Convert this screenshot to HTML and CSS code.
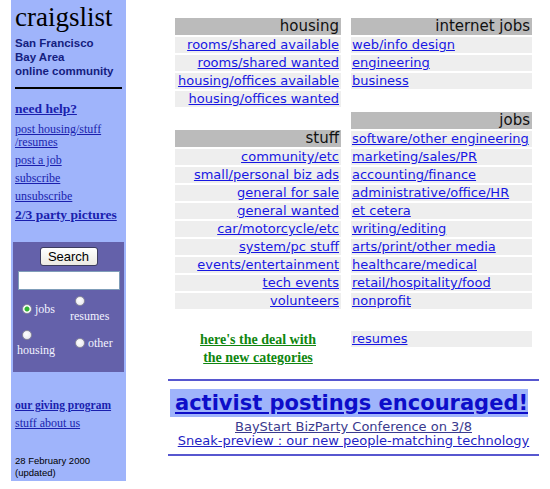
FILE: index.html
```html
<!DOCTYPE html>
<html>
<head>
<meta charset="utf-8">
<title>craigslist</title>
<link rel="stylesheet" href="styles.css">
</head>
<body>
<div class="page">
  <aside class="sidebar">
    <div class="logo">craigslist</div>
    <div class="city">San Francisco<br>Bay Area<br>online community</div>
    <div class="rule"></div>
    <a class="help" href="#">need help?</a>
    <a class="slink" href="#">post housing/stuff /resumes</a>
    <a class="slink" href="#">post a job</a>
    <a class="slink" href="#">subscribe</a>
    <a class="slink" href="#">unsubscribe</a>
    <a class="party" href="#">2/3 party pictures</a>
    <form class="search">
      <button type="button" class="sbtn">Search</button>
      <input class="sinput" type="text">
      <div class="radios">
        <label class="cell inline"><input type="radio" name="c" checked><span>jobs</span></label>
        <label class="cell stack"><input type="radio" name="c"><span>resumes</span></label>
        <label class="cell stack"><input type="radio" name="c"><span>housing</span></label>
        <label class="cell inline"><input type="radio" name="c"><span>other</span></label>
      </div>
    </form>
    <a class="giving" href="#">our giving program</a>
    <a class="about" href="#">stuff about us</a>
    <div class="date">28 February 2000<br>(updated)</div>
  </aside>

  <main class="main">
    <div class="cols">
      <div class="col left">
        <div class="section">
          <div class="hdr">housing</div>
          <div class="row"><a href="#">rooms/shared available</a></div>
          <div class="row"><a href="#">rooms/shared wanted</a></div>
          <div class="row"><a href="#">housing/offices available</a></div>
          <div class="row"><a href="#">housing/offices wanted</a></div>
        </div>
        <div class="section">
          <div class="hdr">stuff</div>
          <div class="row"><a href="#">community/etc</a></div>
          <div class="row"><a href="#">small/personal biz ads</a></div>
          <div class="row"><a href="#">general for sale</a></div>
          <div class="row"><a href="#">general wanted</a></div>
          <div class="row"><a href="#">car/motorcycle/etc</a></div>
          <div class="row"><a href="#">system/pc stuff</a></div>
          <div class="row"><a href="#">events/entertainment</a></div>
          <div class="row"><a href="#">tech events</a></div>
          <div class="row"><a href="#">volunteers</a></div>
        </div>
        <div class="deal"><a href="#">here's the deal with<br>the new categories</a></div>
      </div>
      <div class="col right">
        <div class="section">
          <div class="hdr">internet jobs</div>
          <div class="row"><a href="#">web/info design</a></div>
          <div class="row"><a href="#">engineering</a></div>
          <div class="row"><a href="#">business</a></div>
        </div>
        <div class="section">
          <div class="hdr">jobs</div>
          <div class="row"><a href="#">software/other engineering</a></div>
          <div class="row"><a href="#">marketing/sales/PR</a></div>
          <div class="row"><a href="#">accounting/finance</a></div>
          <div class="row"><a href="#">administrative/office/HR</a></div>
          <div class="row"><a href="#">et cetera</a></div>
          <div class="row"><a href="#">writing/editing</a></div>
          <div class="row"><a href="#">arts/print/other media</a></div>
          <div class="row"><a href="#">healthcare/medical</a></div>
          <div class="row"><a href="#">retail/hospitality/food</a></div>
          <div class="row"><a href="#">nonprofit</a></div>
        </div>
        <div class="section resumes">
          <div class="row"><a href="#">resumes</a></div>
        </div>
      </div>
    </div>

    <div class="bottom">
      <div class="bline"></div>
      <div class="banner"><a href="#">activist postings encouraged!</a></div>
      <div class="news">
        <a class="visited" href="#">BayStart BizParty Conference on 3/8</a><br>
        <a href="#">Sneak-preview : our new people-matching technology</a>
      </div>
      <div class="bline second"></div>
    </div>
  </main>
</div>
</body>
</html>
```
FILE: styles.css
```css
html, body {
  margin: 0;
  padding: 0;
  background: #ffffff;
}

.page {
  display: flex;
  align-items: flex-start;
}

/* ---------- sidebar ---------- */
.sidebar {
  box-sizing: border-box;
  width: 115px;
  height: 481px;
  margin-left: 11px;
  padding: 4px 4px 0;
  background: #9fb4fb;
  display: flex;
  flex-direction: column;
}

.logo {
  font: 27px/27px "Liberation Serif", "Times New Roman", serif;
  color: #000;
}

.city {
  margin-top: 5px;
  font: bold 11.5px/14px "Liberation Sans", Arial, sans-serif;
  color: #14207f;
}

.rule {
  margin-top: 9px;
  height: 2px;
  background: #000;
}

.sidebar a {
  color: #1a1fae;
  text-decoration: underline;
  font-family: "Liberation Serif", "Times New Roman", serif;
}

.help {
  margin-top: 11px;
  font-weight: bold;
  font-size: 13.5px;
  line-height: 18px;
}

.slink {
  margin-top: 5px;
  font-size: 12px;
  line-height: 13px;
}

.party {
  margin-top: 3px;
  font-weight: bold;
  font-size: 13.5px;
  line-height: 18px;
}

.search {
  margin: 18px -2px 0;
  height: 130px;
  box-sizing: border-box;
  background: #6461aa;
  display: flex;
  flex-direction: column;
  align-items: center;
  padding-top: 5px;
}

.sbtn {
  box-sizing: border-box;
  width: 58px;
  height: 19px;
  padding: 0;
  border: 1px solid #3c3c5e;
  border-radius: 3px;
  background: linear-gradient(#ffffff, #eceae2);
  font: 13px/17px "Liberation Sans", Arial, sans-serif;
  color: #000;
}

.sinput {
  box-sizing: border-box;
  margin: 5px 0 0;
  width: 102px;
  height: 19px;
  border: 1px solid #7f9db9;
  background: #fff;
  padding: 0;
}

.radios {
  align-self: stretch;
  margin-top: 2px;
  padding-left: 4px;
  display: grid;
  grid-template-columns: 53px 1fr;
  grid-auto-rows: 34px;
  align-items: center;
}

.cell {
  display: flex;
  font: 12px/12px "Liberation Serif", "Times New Roman", serif;
  color: #f2f2ff;
}

.cell.inline {
  flex-direction: row;
  align-items: center;
}

.cell.stack {
  flex-direction: column;
  align-items: flex-start;
}

.cell input {
  -webkit-appearance: none;
  appearance: none;
  box-sizing: border-box;
  width: 10px;
  height: 10px;
  margin: 0 3px 0 5px;
  border-radius: 50%;
  border: 1px solid #8d8d9c;
  background: radial-gradient(circle at 40% 40%, #ffffff 0, #e4e4ec 100%);
}

.cell.stack input {
  margin-bottom: 4px;
}

.cell input:checked {
  background: radial-gradient(circle, #32b632 0, #32b632 2px, #ffffff 3px, #e8e8ee 100%);
}

.giving {
  margin-top: 24px;
  font-weight: bold;
  font-size: 11.5px;
  line-height: 18px;
}

.about {
  font-size: 12px;
  line-height: 18px;
}

.date {
  margin-top: auto;
  margin-bottom: 2px;
  font: 9.5px/12px "Liberation Sans", Arial, sans-serif;
  color: #000;
}

/* ---------- main ---------- */
.main {
  margin-left: 42px;
  width: 371px;
  padding-top: 18px;
}

.cols {
  display: flex;
  gap: 10px;
  margin-left: 7px;
}

.col {
  display: flex;
  flex-direction: column;
}

.col.left {
  width: 166px;
  text-align: right;
}

.col.right {
  width: 181px;
  text-align: left;
}

.section {
  display: flex;
  flex-direction: column;
  gap: 2px;
}

.section + .section {
  margin-top: 23px;
}

.section.resumes {
  margin-top: 22px;
}

.hdr {
  height: 17px;
  line-height: 17px;
  padding: 0 2px;
  background: #bbbbbb;
  font-family: "DejaVu Sans", Verdana, sans-serif;
  font-size: 15px;
  color: #111;
  text-align: right;
  white-space: nowrap;
}

.row {
  height: 16px;
  line-height: 16px;
  padding: 0 2px 0 1px;
  background: #eeeeee;
  white-space: nowrap;
  font-family: "DejaVu Sans", Verdana, sans-serif;
  font-size: 13px;
}

.row a,
.news a,
.banner a {
  color: #1717e3;
  text-decoration: underline;
}

.deal {
  margin-top: 22px;
  text-align: center;
  font: bold 14px/18px "Liberation Serif", "Times New Roman", serif;
}

.deal a {
  color: #0f860f;
  text-decoration: underline;
}

.bottom {
  margin-top: 12px;
}

.bline {
  height: 2px;
  background: #5757cf;
}

.bline.second {
  margin-top: 6px;
}

.banner {
  margin: 8px 0 0 2px;
  width: 358px;
  height: 28px;
  background: #9fb4fb;
  text-align: right;
  font: bold 21px/28px "DejaVu Sans", Verdana, sans-serif;
  white-space: nowrap;
}

.banner a {
  color: #0d0dc9;
}

.news {
  margin-top: 3px;
  text-align: center;
  font: 13px/14px "DejaVu Sans", Verdana, sans-serif;
  white-space: nowrap;
}

.news a.visited {
  color: #3a3a8e;
}

.news a {
  color: #1f1fc4;
}
```
